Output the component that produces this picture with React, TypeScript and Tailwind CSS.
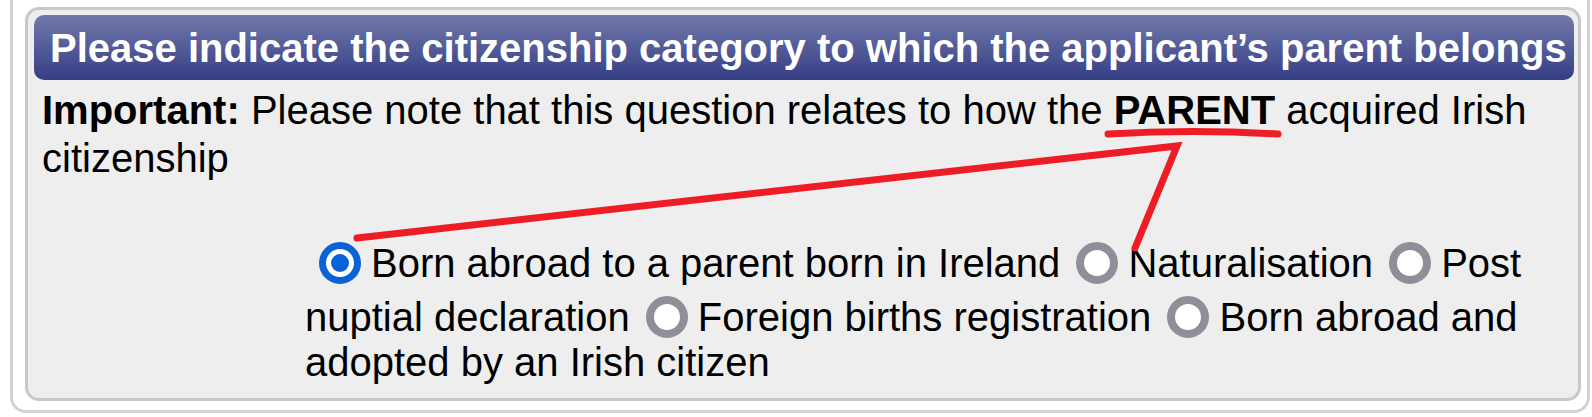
import React from "react";

type Option = { label: string; checked?: boolean };

const options: Option[] = [
  { label: "Born abroad to a parent born in Ireland", checked: true },
  { label: "Naturalisation" },
  { label: "Post nuptial declaration" },
  { label: "Foreign births registration" },
  { label: "Born abroad and adopted by an Irish citizen" },
];

function Radio({ checked }: { checked?: boolean }) {
  return checked ? (
    <span className="mt-[10px] inline-block h-[42px] w-[42px] rounded-full border-[7px] border-[#0b62d8] bg-white p-[5px] align-[-7px]">
      <span className="block h-[18px] w-[18px] rounded-full bg-[#0b62d8]" />
    </span>
  ) : (
    <span className="mt-[10px] inline-block h-[42px] w-[42px] rounded-full border-[8px] border-[#8f8e99] bg-white align-[-7px]" />
  );
}

export default function App() {
  return (
    <div className="relative h-[417px] w-[1592px] overflow-hidden bg-white font-['Liberation_Sans',Arial,sans-serif] text-black">
      <div className="ml-[10px] mr-[2px] h-[413px] rounded-b-[16px] border-x-[3px] border-b-[3px] border-[#d2d2d2] bg-white pl-[12px] pr-[6px] pt-[7px]">
        <div className="h-[394px] rounded-[14px] border-[3px] border-[#c9c9c9] bg-[#eeeeee] pl-[6px] pr-[4px] pt-[5px]">
          <div className="flex h-[65px] items-center rounded-[10px] bg-gradient-to-b from-[#7379ab] to-[#363e84] pl-[16px] text-[40px] font-bold leading-none text-white">
            Please indicate the citizenship category to which the applicant’s parent belongs
          </div>
          <p className="mt-[6px] pl-[8px] text-[40px] leading-[48px]">
            <b>Important:</b> Please note that this question relates to how the <b>PARENT</b> acquired Irish citizenship
          </p>
          <div className="ml-[271px] mt-[50px] w-[1240px] text-[40px] leading-[45px]">
            {options.map((o, i) => (
              <React.Fragment key={i}>
                <span className={i === 0 ? "ml-[14px] mr-[10px]" : "ml-[5px] mr-[10px]"}>
                  <Radio checked={o.checked} />
                </span>
                {o.label}
                {i < options.length - 1 ? " " : ""}
              </React.Fragment>
            ))}
          </div>
        </div>
      </div>

      <svg className="pointer-events-none absolute left-0 top-0" width="1592" height="417">
        <path d="M1108 134 Q1193 129 1278 134" stroke="#ee1c25" strokeWidth="7" fill="none" strokeLinecap="round" />
        <path d="M357 238 L1177 146 L1135 248" stroke="#ee1c25" strokeWidth="7" fill="none" strokeLinecap="round" strokeLinejoin="miter" />
      </svg>
    </div>
  );
}
